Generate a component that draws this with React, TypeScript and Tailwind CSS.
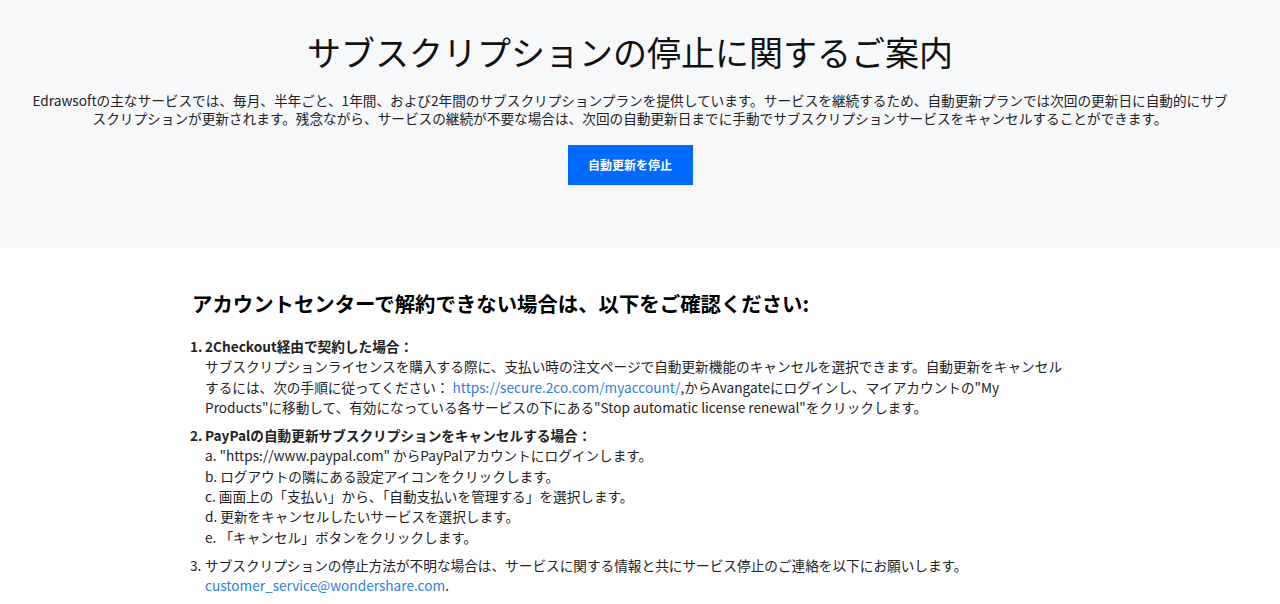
import React from "react";

const font = { fontFamily: '"Noto Sans CJK JP", "Noto Sans", sans-serif' };

const LinkText = ({ children }: { children: React.ReactNode }) => (
  <a href="#" className="text-[#2f7de1]">
    {children}
  </a>
);

const paypalSteps = [
  'a. "https://www.paypal.com" からPayPalアカウントにログインします。',
  "b. ログアウトの隣にある設定アイコンをクリックします。",
  "c. 画面上の「支払い」から、「自動支払いを管理する」を選択します。",
  "d. 更新をキャンセルしたいサービスを選択します。",
  "e. 「キャンセル」ボタンをクリックします。",
];

const App = () => {
  return (
    <div className="min-h-screen bg-white text-[#1f1f1f]" style={font}>
      {/* hero */}
      <section className="bg-[#f7f8fa] pt-[27px] pb-[63px]">
        <div className="w-[1260px]">
          <h1 className="text-center text-[34px] leading-[50px] font-normal text-[#111]">
            サブスクリプションの停止に関するご案内
          </h1>
          <p className="mx-auto mt-[14px] w-[1200px] text-center text-[13.65px] leading-[18px] text-[#222]">
            Edrawsoftの主なサービスでは、毎月、半年ごと、1年間、および2年間のサブスクリプションプランを提供しています。サービスを継続するため、自動更新プランでは次回の更新日に自動的にサブスクリプションが更新されます。残念ながら、サービスの継続が不要な場合は、次回の自動更新日までに手動でサブスクリプションサービスをキャンセルすることができます。
          </p>
          <div className="mt-[18px] flex justify-center">
            <button className="h-10 w-[125px] bg-[#006aff] text-[12px] font-bold text-white">
              自動更新を停止
            </button>
          </div>
        </div>
      </section>

      {/* help list */}
      <div className="w-[1260px]">
        <section className="mx-auto w-[880px] pt-[41px]">
          <h2 className="pl-[2px] text-[20.4px] leading-[28px] font-bold text-black">
            アカウントセンターで解約できない場合は、以下をご確認ください:
          </h2>
          <ol className="mt-[19px] flex flex-col gap-[8px] text-[13.65px] leading-[20.3px] text-[#222]">
            <li className="flex">
              <span className="w-[15px] shrink-0 font-bold">1.</span>
              <div>
                <div className="font-bold">2Checkout経由で契約した場合：</div>
                <div>
                  サブスクリプションライセンスを購入する際に、支払い時の注文ページで自動更新機能のキャンセルを選択できます。自動更新をキャンセルするには、次の手順に従ってください：{" "}
                  <LinkText>https://secure.2co.com/myaccount/</LinkText>
                  ,からAvangateにログインし、マイアカウントの"My Products"に移動して、有効になっている各サービスの下にある"Stop automatic license renewal"をクリックします。
                </div>
              </div>
            </li>
            <li className="flex">
              <span className="w-[15px] shrink-0 font-bold">2.</span>
              <div>
                <div className="font-bold">
                  PayPalの自動更新サブスクリプションをキャンセルする場合：
                </div>
                {paypalSteps.map((step) => (
                  <div key={step}>{step}</div>
                ))}
              </div>
            </li>
            <li className="flex">
              <span className="w-[15px] shrink-0">3.</span>
              <div>
                <div>
                  サブスクリプションの停止方法が不明な場合は、サービスに関する情報と共にサービス停止のご連絡を以下にお願いします。
                </div>
                <div>
                  <LinkText>customer_service@wondershare.com</LinkText>.
                </div>
              </div>
            </li>
          </ol>
        </section>
      </div>
    </div>
  );
};

export default App;
